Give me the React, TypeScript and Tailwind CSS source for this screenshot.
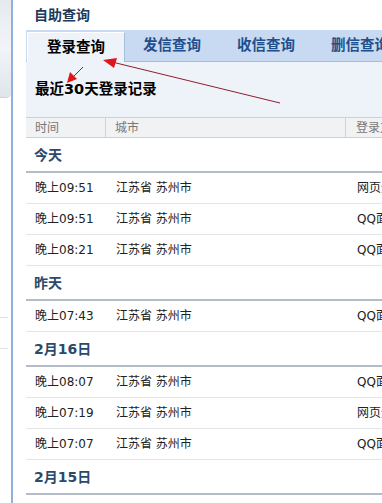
import React from 'react';

interface LoginRecord {
  time: string;
  city: string;
  type: string;
}

interface DayGroup {
  label: string;
  records: LoginRecord[];
}

const groups: DayGroup[] = [
  {
    label: '今天',
    records: [
      { time: '晚上09:51', city: '江苏省 苏州市', type: '网页登录' },
      { time: '晚上09:51', city: '江苏省 苏州市', type: 'QQ面板登录' },
      { time: '晚上08:21', city: '江苏省 苏州市', type: 'QQ面板登录' },
    ],
  },
  {
    label: '昨天',
    records: [{ time: '晚上07:43', city: '江苏省 苏州市', type: 'QQ面板登录' }],
  },
  {
    label: '2月16日',
    records: [
      { time: '晚上08:07', city: '江苏省 苏州市', type: 'QQ面板登录' },
      { time: '晚上07:19', city: '江苏省 苏州市', type: '网页登录' },
      { time: '晚上07:07', city: '江苏省 苏州市', type: 'QQ面板登录' },
    ],
  },
  {
    label: '2月15日',
    records: [],
  },
];

const tabs = ['登录查询', '发信查询', '收信查询', '删信查询'];

export default function App() {
  return (
    <div className="relative w-[382px] h-[503px] overflow-hidden bg-white flex font-['DejaVu_Sans','Noto_Sans_CJK_SC',sans-serif]">
      {/* left side strip */}
      <div className="w-[13px] shrink-0 flex flex-col border-r-2 border-[#8fb1dc]">
        <div className="h-[98px] bg-gradient-to-b from-[#e6eaef] via-[#f2f4f7] to-[#dfe5ec] rounded-br-[5px] border-b border-[#c9d6e6]" />
        <div className="flex-1 bg-white pt-[219px]">
          <div className="h-px w-[8px] bg-[#e2e2e2]" />
          <div className="h-px w-[8px] bg-[#e2e2e2] mt-[30px]" />
        </div>
      </div>

      <div className="flex-1 min-w-0 ml-[13px] flex flex-col">
        {/* title */}
        <div className="h-[30px] pl-[8px] pt-[5px] text-[14px] font-bold text-[#1d3a5a]">自助查询</div>

        {/* tabs */}
        <div className="h-[32px] bg-[#c7daf1] border-b border-[#a8bfdc] flex items-end pl-px">
          {tabs.map((tab, i) =>
            i === 0 ? (
              <div
                key={tab}
                className="w-[98px] h-[30px] -mb-px shrink-0 bg-[#eef3fa] border-t border-l border-white border-r border-r-[#a8bfdc] flex items-center justify-center text-[14.5px] font-bold text-black"
              >
                {tab}
              </div>
            ) : (
              <div
                key={tab}
                className="w-[94px] h-full shrink-0 flex items-center justify-center text-[14.5px] font-bold text-[#1f4f8e]"
              >
                {tab}
              </div>
            )
          )}
        </div>

        {/* sub title */}
        <div className="h-[55px] bg-[#eef3fa] pl-[9px] pt-[17px] text-[14.5px] font-bold text-black">
          最近30天登录记录
        </div>

        {/* table header */}
        <div className="h-[21px] flex items-center bg-[#f1f2f4] border-t border-b border-[#cdd0d4] text-[12px] text-[#777]">
          <div className="w-[80px] shrink-0 h-full flex items-center pl-[9px] border-r border-[#cfd2d6]">时间</div>
          <div className="w-[240px] shrink-0 h-full flex items-center pl-[9px] border-r border-[#cfd2d6]">城市</div>
          <div className="shrink-0 h-full flex items-center pl-[10px] whitespace-nowrap">登录方式</div>
        </div>

        {/* rows */}
        {groups.map((group) => (
          <div key={group.label}>
            <div className="h-[35px] flex items-center pl-[8px] pt-px border-b-2 border-[#b2bdc9] text-[14px] font-bold text-[#2a4a6c]">
              {group.label}
            </div>
            {group.records.map((r, idx) => (
              <div
                key={idx}
                className="h-[31px] flex items-center border-b border-[#e3e5e8] text-[12px] text-[#222] whitespace-nowrap"
              >
                <div className="w-[80px] shrink-0 pl-[9px]">{r.time}</div>
                <div className="w-[240px] shrink-0 pl-[10px]">{r.city}</div>
                <div className="shrink-0 pl-[11px]">{r.type}</div>
              </div>
            ))}
          </div>
        ))}
      </div>

      {/* red annotation arrows */}
      <svg
        className="absolute left-0 top-0 pointer-events-none"
        width="382"
        height="503"
        viewBox="0 0 382 503"
      >
        <line x1="280" y1="103" x2="112" y2="62" stroke="#8c1f2c" strokeWidth="1" />
        <polygon points="103,60 117,58 114,68" fill="#e0141c" />
        <line x1="83" y1="67" x2="73" y2="77" stroke="#8c1f2c" strokeWidth="1" />
        <polygon points="67,83 70,72 77,79" fill="#e0141c" />
      </svg>
    </div>
  );
}
